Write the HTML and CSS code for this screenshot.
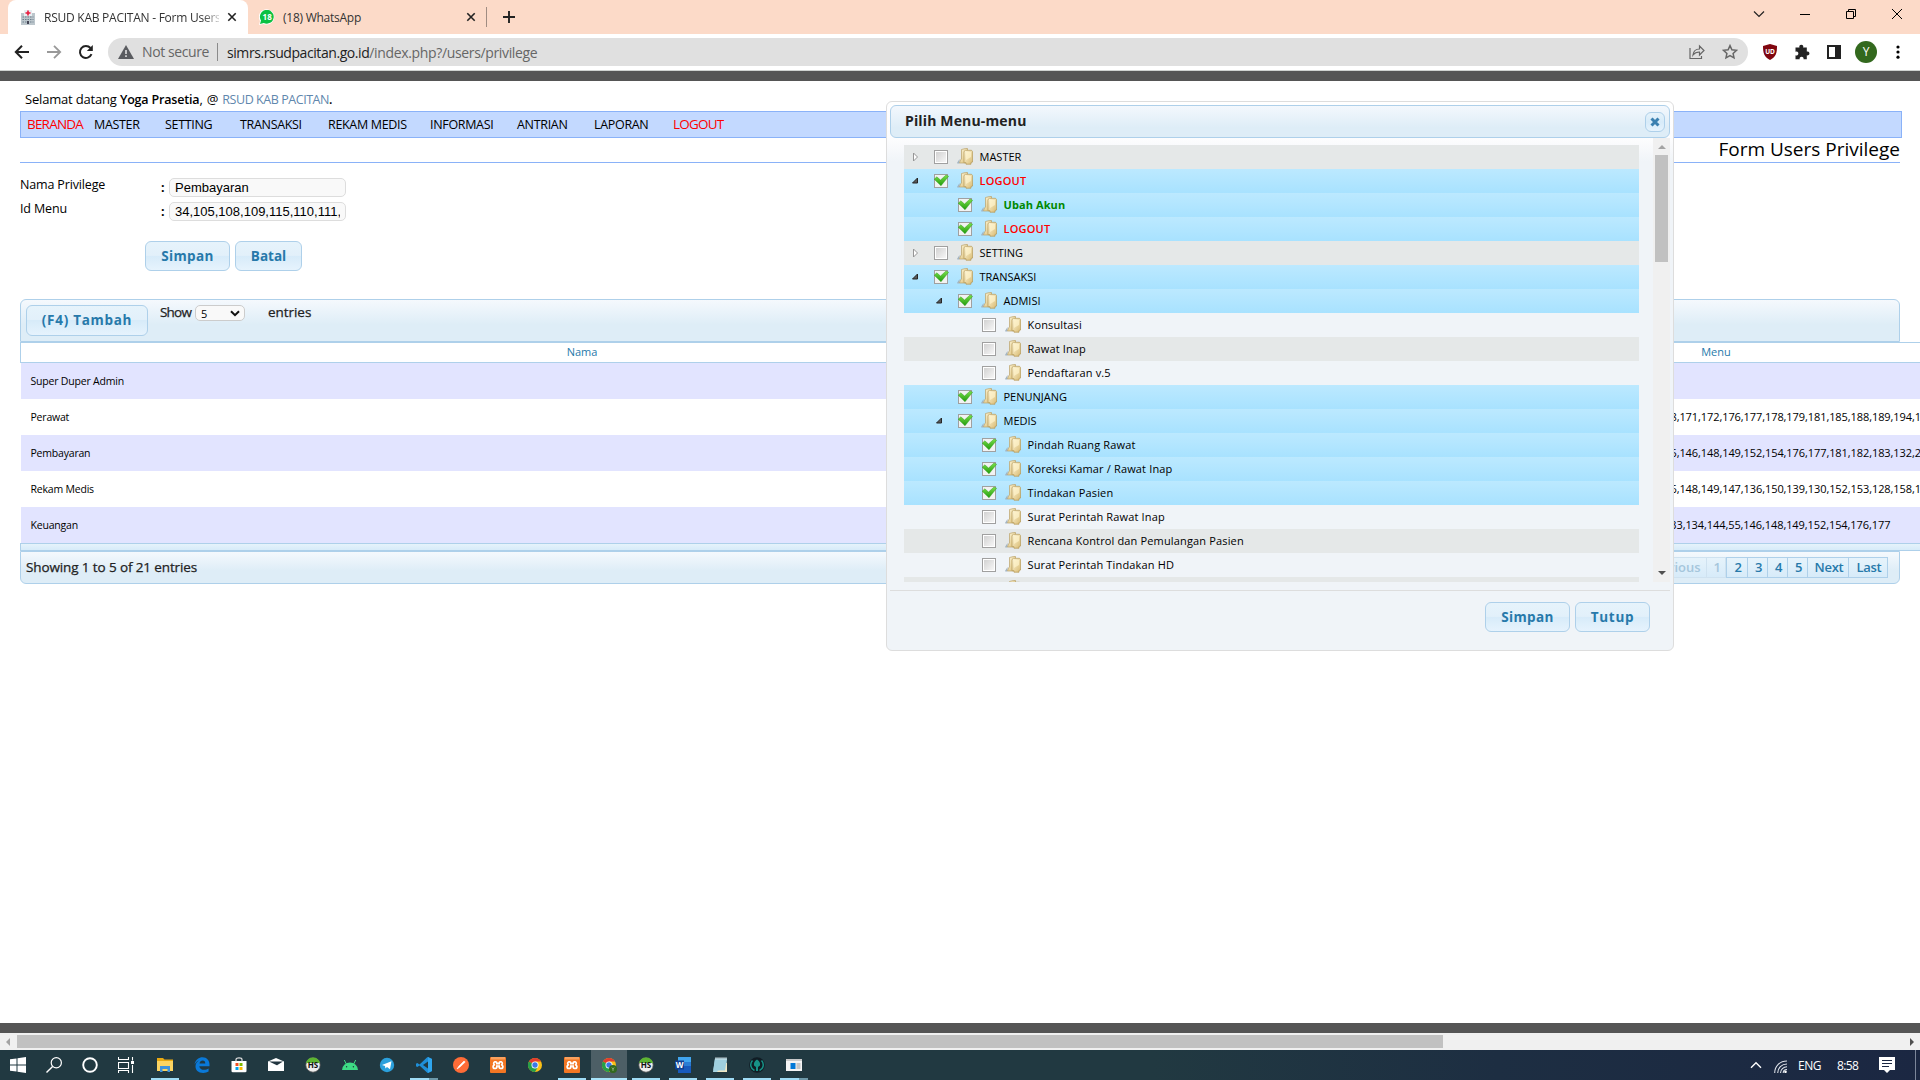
FILE: index.html
```html
<!DOCTYPE html>
<html lang="id">
<head>
<meta charset="utf-8">
<title>RSUD KAB PACITAN - Form Users Privilege</title>
<link rel="stylesheet" href="styles.css">
</head>
<body>
<svg class="defs" aria-hidden="true">
  <defs>
    <linearGradient id="g-folder" x1="0" y1="0" x2="1" y2="1"><stop offset="0" stop-color="#fff8dc"/><stop offset="1" stop-color="#d9bb72"/></linearGradient>
    <linearGradient id="g-box" x1="0" y1="0" x2="1" y2="1"><stop offset="0" stop-color="#d2d2d2"/><stop offset="1" stop-color="#f6f6f6"/></linearGradient>
    <linearGradient id="g-tick" x1="0" y1="0" x2="0" y2="1"><stop offset="0" stop-color="#7be04a"/><stop offset="1" stop-color="#1f9a0c"/></linearGradient>
    <symbol id="folder" viewBox="0 0 16 17"><path d="M0 15l2.500-4v4.500H.5z" fill="#a3b4c2"/><path d="M4.500 1.500l4-1h2V14l-1 1H2.500l1-3 1-1z" fill="url(#g-folder)" stroke="#b9a068" stroke-width=".7"/><path d="M7 3.500l1.500-1.200h6l1.100 1.200v10.500l-1.600.5v1.700H9v-1.500H7z" fill="url(#g-folder)" stroke="#b39755" stroke-width=".7"/><path d="M9 4h5v5l-5 3z" fill="#fff4cc" opacity=".7"/></symbol>
    <symbol id="off" viewBox="0 0 16 16"><rect x="1.500" y="1.500" width="13" height="13" fill="#fff" stroke="#a0a0a0"/><rect x="3" y="3" width="10" height="10" fill="url(#g-box)"/></symbol>
    <symbol id="on" viewBox="0 0 16 16"><rect x="1.500" y="1.500" width="13" height="13" fill="#f2f2f2" stroke="#a0a0a0"/><path d="M1.200 6.200L3.800 3.800 7.500 7l5.500-5 2.600 1.300L8 12.800z" fill="url(#g-tick)" stroke="#1e9412" stroke-width=".4"/></symbol>
    <symbol id="closed" viewBox="0 0 8 10"><path d="M2.500 1v8l4-4z" fill="#fff" stroke="#969696"/></symbol>
    <symbol id="open" viewBox="0 0 8 10"><path d="M6.500 2v5h-5z" fill="#595959" stroke="#262626"/></symbol>
    <symbol id="hs" viewBox="0 0 16 16"><circle cx="8" cy="8" r="7.200" fill="#eee" stroke="#555" stroke-width=".8"/><path d="M1 6a7.200 7.200 0 0 1 14 0z" fill="#5cb531"/><text x="8" y="11" text-anchor="middle" class="hs-text">HS</text></symbol>
    <symbol id="xampp" viewBox="0 0 16 16"><rect width="16" height="16" rx="1" fill="#f37623"/><rect x="1" width="14" height="2.500" fill="#f8a15e"/><path d="M4.800 4.800a1.700 1.700 0 0 0 0 3.200 1.700 1.700 0 0 0 0 3.400h1c1.400 0 1-2 1-2.400h2.400c0 .4-.4 2.400 1 2.400h1a1.700 1.700 0 0 0 0-3.400 1.700 1.700 0 0 0 0-3.200h-1c-1.400 0-1 1.900-1 1.900H6.800s.4-1.900-1-1.900z" fill="none" stroke="#fff" stroke-width="1.700"/></symbol>
    <symbol id="chrome" viewBox="0 0 16 16"><circle cx="8" cy="8" r="7" fill="#fbc116"/><path d="M8 8L1.900 4.500A7 7 0 0 1 14.100 4.500H8z" fill="#e33b2e"/><path d="M8 8l-6.100-3.500A7 7 0 0 0 8 15l3-5.200z" fill="#269f49"/><circle cx="8" cy="8" r="3.500" fill="#fff"/><circle cx="8" cy="8" r="2.700" fill="#3b78e7"/></symbol>
  </defs>
</svg>

<header class="tabs">
  <div class="tab active">
    <svg class="fav" viewBox="0 0 16 16"><path d="M1 4h3V1h8v3h3v12H1z" fill="#bcc6cc"/><path d="M4 1h8v6H4z" fill="#e8eef2"/><path d="M7.200 1.500h1.600v1.700h1.700v1.600H8.800v1.700H7.200V4.800H5.500V3.200h1.700z" fill="#e8193c"/><path d="M2.500 8h11M2.500 10.500h11M2.500 13h11" stroke="#6d7f8c" stroke-width="1.200" stroke-dasharray="1.500 1"/><path d="M7 12h2v3H7z" fill="#445"/></svg>
    <span class="tab-title fade">RSUD KAB PACITAN - Form Users</span>
    <svg class="x" viewBox="0 0 10 10"><path d="M1.300 1.300l7.400 7.400M8.700 1.300L1.300 8.700" stroke="#222" stroke-width="1.600"/></svg>
  </div>
  <div class="tab second">
    <svg class="fav" viewBox="0 0 16 16"><path d="M0 16l1-4A7.700 7.700 0 1 1 4.500 15z" fill="#fff"/><path d="M1 15l1-3.500A6.900 6.900 0 1 1 4.800 14z" fill="#0cc143"/><text x="8.200" y="11" text-anchor="middle" class="wa-text">18</text></svg>
    <span class="tab-title">(18) WhatsApp</span>
    <svg class="x" viewBox="0 0 10 10"><path d="M1.300 1.300l7.400 7.400M8.700 1.300L1.300 8.700" stroke="#222" stroke-width="1.600"/></svg>
  </div>
  <svg class="plus" viewBox="0 0 14 14"><path d="M7 1v12M1 7h12" stroke="#222" stroke-width="1.900"/></svg>
  <div class="window-buttons">
    <svg viewBox="0 0 12 12"><path d="M1 3.500l5 5 5-5" fill="none" stroke="#222" stroke-width="1.200"/></svg>
    <svg viewBox="0 0 12 12"><path d="M1 6.500h10" stroke="#000"/></svg>
    <svg viewBox="0 0 12 12"><path d="M1.500 3.500h7v7h-7zM3.500 3.500v-2h7v7h-2" fill="none" stroke="#000"/></svg>
    <svg viewBox="0 0 12 12"><path d="M1 1l10 10M11 1L1 11" stroke="#000"/></svg>
  </div>
</header>

<div class="toolbar">
  <svg class="nav-icon" viewBox="0 0 16 16"><path d="M15 8H2M8 1.800L1.800 8 8 14.200" fill="none" stroke="#222" stroke-width="2"/></svg>
  <svg class="nav-icon" viewBox="0 0 16 16"><path d="M1 8h13M8 1.800L14.200 8 8 14.200" fill="none" stroke="#999" stroke-width="1.800"/></svg>
  <svg class="nav-icon" viewBox="0 0 16 16"><path d="M13.500 10.200A6 6 0 1 1 12.500 4" fill="none" stroke="#222" stroke-width="2"/><path d="M14.800 1v6H8.800z" fill="#222"/></svg>
  <div class="omnibox">
    <svg class="warn" viewBox="0 0 16 14"><path d="M8 0l8 14H0z" fill="#5a5c60"/><path d="M8 5v4M8 10.300v1.700" stroke="#e0e0e0" stroke-width="1.600"/></svg>
    <span class="not-secure">Not secure</span>
    <span class="url"><b>simrs.rsudpacitan.go.id</b><i>/index.php?/users/privilege</i></span>
    <svg class="share" viewBox="0 0 16 16"><path d="M1 4v10.500h11.500V12" fill="none" stroke="#666" stroke-width="1.200"/><path d="M4 11c.5-4 3-6 6.500-6V2L15 6.500 10.500 11V8C7.500 8 5.500 9 4 11z" fill="none" stroke="#666" stroke-width="1.200"/></svg>
    <svg class="star" viewBox="0 0 16 16"><path d="M8 1.600l1.900 4.200 4.600.5-3.400 3.100.9 4.500L8 11.600l-4 2.300.9-4.500L1.500 6.300l4.600-.5z" fill="none" stroke="#666" stroke-width="1.500"/></svg>
  </div>
  <div class="extensions">
    <svg viewBox="0 0 16 16"><path d="M8 0l7 2c0 7-1 11-7 14C2 13 1 9 1 2z" fill="#800610"/><text x="8" y="9.500" text-anchor="middle" class="ub-text">UD</text></svg>
    <svg viewBox="0 0 16 16"><path d="M1.500 3.500h4a2 2 0 1 1 3.600 0h3.700v4a2 2 0 1 1 0 3.800v4H9.500a2 2 0 1 0-3.800 0H1.500v-4a2 2 0 1 0 0-3.600z" fill="#222"/></svg>
    <svg viewBox="0 0 16 16"><path d="M1 1h14v14H1zM3 3v10h6V3z" fill="#222" fill-rule="evenodd"/></svg>
    <span class="avatar">Y</span>
    <svg viewBox="0 0 16 16"><circle cx="8" cy="3" r="1.600"/><circle cx="8" cy="8" r="1.600"/><circle cx="8" cy="13.200" r="1.600"/></svg>
  </div>
</div>

<main class="page">
  <p class="welcome"><span>Selamat datang </span><b>Yoga Prasetia</b><span class="at">, @ </span><a>RSUD KAB PACITAN</a><b>.</b></p>
  <nav class="menu"><span class="hot">BERANDA</span><span>MASTER</span><span>SETTING</span><span>TRANSAKSI</span><span>REKAM MEDIS</span><span>INFORMASI</span><span>ANTRIAN</span><span>LAPORAN</span><span class="hot logout">LOGOUT</span></nav>
  <h1 class="title"><span>Form Users Privilege</span></h1>

  <form class="form">
    <div class="field"><label>Nama Privilege</label><b>:</b><input class="input" value="Pembayaran"></div>
    <div class="field"><label>Id Menu</label><b>:</b><input class="input" value="34,105,108,109,115,110,111,112"></div>
    <div class="form-actions"><span class="btn w-simpan">Simpan</span><span class="btn w-batal">Batal</span></div>
  </form>

  <section class="grid">
    <div class="grid-top">
      <span class="btn w-tambah">(F4) Tambah</span>
      <span class="show">Show</span>
      <span class="select"><span>5</span><svg viewBox="0 0 10 7"><path d="M1 1.200l4 4 4-4" fill="none" stroke="#111" stroke-width="2"/></svg></span>
      <span class="entries">entries</span>
    </div>
    <div class="grid-head"><span class="th-name">Nama</span><span class="th-menu">Menu</span></div>
    <div class="row odd"><span class="name">Super Duper Admin</span></div>
    <div class="row"><span class="name">Perawat</span><span class="ids">158,171,172,176,177,178,179,181,185,188,189,194,195</span></div>
    <div class="row odd"><span class="name">Pembayaran</span><span class="ids">145,146,148,149,152,154,176,177,181,182,183,132,201</span></div>
    <div class="row"><span class="name">Rekam Medis</span><span class="ids">146,148,149,147,136,150,139,130,152,153,128,158,159</span></div>
    <div class="row odd"><span class="name">Keuangan</span><span class="ids short">133,134,144,55,146,148,149,152,154,176,177</span></div>
    <div class="grid-foot"></div>
    <div class="grid-bottom">
      <span class="info">Showing 1 to 5 of 21 entries</span>
      <div class="pager"><span class="pg dim prev">Previous</span><span class="pg dim n1">1</span><span class="pg n2">2</span><span class="pg">3</span><span class="pg">4</span><span class="pg">5</span><span class="pg next">Next</span><span class="pg last">Last</span></div>
    </div>
  </section>

  <div class="dialog">
    <div class="dialog-title"><span>Pilih Menu-menu</span><span class="close"><svg viewBox="0 0 10 10"><path d="M1.500 1.500l7 7M8.500 1.500l-7 7" stroke="#3b80b0" stroke-width="3"/></svg></span></div>
    <div class="dialog-body">
      <div class="tree">
        <div class="node even"><svg class="arrow"><use href="#closed"/></svg><svg class="check"><use href="#off"/></svg><svg class="fold"><use href="#folder"/></svg><span class="caps">MASTER</span></div>
        <div class="node sel"><svg class="arrow"><use href="#open"/></svg><svg class="check"><use href="#on"/></svg><svg class="fold"><use href="#folder"/></svg><span class="red">LOGOUT</span></div>
        <div class="node sel l1"><svg class="arrow"></svg><svg class="check"><use href="#on"/></svg><svg class="fold"><use href="#folder"/></svg><span class="green">Ubah Akun</span></div>
        <div class="node sel l1"><svg class="arrow"></svg><svg class="check"><use href="#on"/></svg><svg class="fold"><use href="#folder"/></svg><span class="red">LOGOUT</span></div>
        <div class="node even"><svg class="arrow"><use href="#closed"/></svg><svg class="check"><use href="#off"/></svg><svg class="fold"><use href="#folder"/></svg><span class="caps">SETTING</span></div>
        <div class="node sel"><svg class="arrow"><use href="#open"/></svg><svg class="check"><use href="#on"/></svg><svg class="fold"><use href="#folder"/></svg><span class="caps">TRANSAKSI</span></div>
        <div class="node sel l1"><svg class="arrow"><use href="#open"/></svg><svg class="check"><use href="#on"/></svg><svg class="fold"><use href="#folder"/></svg><span class="caps">ADMISI</span></div>
        <div class="node l2"><svg class="arrow"></svg><svg class="check"><use href="#off"/></svg><svg class="fold"><use href="#folder"/></svg><span>Konsultasi</span></div>
        <div class="node even l2"><svg class="arrow"></svg><svg class="check"><use href="#off"/></svg><svg class="fold"><use href="#folder"/></svg><span>Rawat Inap</span></div>
        <div class="node l2"><svg class="arrow"></svg><svg class="check"><use href="#off"/></svg><svg class="fold"><use href="#folder"/></svg><span>Pendaftaran v.5</span></div>
        <div class="node sel l1"><svg class="arrow"></svg><svg class="check"><use href="#on"/></svg><svg class="fold"><use href="#folder"/></svg><span class="caps">PENUNJANG</span></div>
        <div class="node sel l1"><svg class="arrow"><use href="#open"/></svg><svg class="check"><use href="#on"/></svg><svg class="fold"><use href="#folder"/></svg><span class="caps">MEDIS</span></div>
        <div class="node sel l2"><svg class="arrow"></svg><svg class="check"><use href="#on"/></svg><svg class="fold"><use href="#folder"/></svg><span>Pindah Ruang Rawat</span></div>
        <div class="node sel l2"><svg class="arrow"></svg><svg class="check"><use href="#on"/></svg><svg class="fold"><use href="#folder"/></svg><span>Koreksi Kamar / Rawat Inap</span></div>
        <div class="node sel l2"><svg class="arrow"></svg><svg class="check"><use href="#on"/></svg><svg class="fold"><use href="#folder"/></svg><span>Tindakan Pasien</span></div>
        <div class="node l2"><svg class="arrow"></svg><svg class="check"><use href="#off"/></svg><svg class="fold"><use href="#folder"/></svg><span>Surat Perintah Rawat Inap</span></div>
        <div class="node even l2"><svg class="arrow"></svg><svg class="check"><use href="#off"/></svg><svg class="fold"><use href="#folder"/></svg><span>Rencana Kontrol dan Pemulangan Pasien</span></div>
        <div class="node l2"><svg class="arrow"></svg><svg class="check"><use href="#off"/></svg><svg class="fold"><use href="#folder"/></svg><span>Surat Perintah Tindakan HD</span></div>
        <div class="node even l2"><svg class="arrow"></svg><svg class="check"></svg><svg class="fold"><use href="#folder"/></svg></div>
      </div>
      <div class="vscroll"><svg viewBox="0 0 8 4"><path d="M0 4l4-4 4 4z" fill="#a3a3a3"/></svg><i></i><svg class="down" viewBox="0 0 8 4"><path d="M0 0l4 4 4-4z" fill="#505050"/></svg></div>
    </div>
    <div class="dialog-actions"><span class="btn w-simpan">Simpan</span><span class="btn w-tutup">Tutup</span></div>
  </div>
</main>

<div class="hscroll"><svg viewBox="0 0 4 8"><path d="M4 0L0 4l4 4z" fill="#a3a3a3"/></svg><i></i><svg class="right" viewBox="0 0 4 8"><path d="M0 0l4 4-4 4z" fill="#505050"/></svg></div>

<footer class="taskbar">
  <span class="sys"><svg viewBox="0 0 16 16"><path d="M0 2.300l6.500-.9v6.100H0zM7.500 1.200L16 0v7.500H7.500zM0 8.500h6.500v6.100L0 13.700zM7.500 8.500H16V16l-8.500-1.200z" fill="#fff"/></svg></span>
  <span class="sys"><svg viewBox="0 0 16 16"><circle cx="10.300" cy="5.700" r="5.100" fill="none" stroke="#fff" stroke-width="1.200"/><path d="M6.600 9.400L.5 15.500" stroke="#fff" stroke-width="1.400"/></svg></span>
  <span class="sys"><svg viewBox="0 0 16 16"><circle cx="8" cy="8" r="6.800" fill="none" stroke="#fff" stroke-width="1.900"/></svg></span>
  <span class="sys"><svg viewBox="0 0 16 16"><path d="M.5 0v2.500h10V0M.5 5.500h10v6H.5zM.5 16v-2.500h10V16M14.500 0v3.500M14.500 8v8" fill="none" stroke="#fff" stroke-width="1.100"/><path d="M13 4h3v3h-3z" fill="#fff"/></svg></span>
  <span class="app run first"><svg viewBox="0 0 16 16"><path d="M0 1h6l1.500 1.500H16V14H0z" fill="#e9a912"/><path d="M0 4h16v10H0z" fill="#fcd462"/><path d="M3 9h10v6h-2.500v-3h-5v3H3z" fill="#3f93dc"/></svg></span>
  <span class="app"><svg viewBox="0 0 16 16"><path d="M.5 7.500C1.500 2.500 5 .3 8.500.3c4.500 0 7 3.400 7 7v1.900H5.300c.2 2.500 2.500 3.600 4.700 3.600 1.800 0 3.300-.5 4.600-1.300v3.100c-1.600.9-3.300 1.300-5.300 1.300-5.200 0-8-3.200-7.800-7 .1-2.300 1.500-4.300 3.500-5.500-2 .4-3.500 2-4.500 4.100zM5.500 6.500h5.800c0-1.800-.9-3-2.600-3S5.800 4.800 5.500 6.500z" fill="#0a79d8"/></svg></span>
  <span class="app"><svg viewBox="0 0 16 16"><path d="M.5 4h15v10.500l-1 .8h-13l-1-.8z" fill="#fff"/><path d="M5 4.500V2.600C5 .2 11 .2 11 2.600v1.900" fill="none" stroke="#ddd" stroke-width="1.200"/><path d="M4.500 6h3v3h-3z" fill="#f25022"/><path d="M8.500 6h3v3h-3z" fill="#7fba00"/><path d="M4.500 10h3v3h-3z" fill="#00a4ef"/><path d="M8.500 10h3v3h-3z" fill="#ffb900"/></svg></span>
  <span class="app"><svg viewBox="0 0 16 16"><path d="M0 4.500L8 1l8 3.500V14H0z" fill="#fff"/><path d="M1 4.500h14L9 8.300l3 1.500z" fill="#22353f"/></svg></span>
  <span class="app"><svg><use href="#hs"/></svg></span>
  <span class="app"><svg viewBox="0 0 16 16"><path d="M0 13a8 7.500 0 0 1 16 0z" fill="#3ddc84"/><path d="M2.300 3l2 4M13.700 3l-2 4" stroke="#3ddc84"/><circle cx="4.600" cy="9.800" r=".7" fill="#22353f"/><circle cx="11.400" cy="9.800" r=".7" fill="#22353f"/></svg></span>
  <span class="app"><svg viewBox="0 0 16 16"><circle cx="8" cy="8" r="7.200" fill="#2ba0dc"/><path d="M3 8l9.500-3.800L11 12.200 8 10l-1.600 1.600L6 9z" fill="#fff"/></svg></span>
  <span class="app run stack"><svg viewBox="0 0 16 16"><path d="M11.500 0L16 2v12l-4.500 2-8-7.500L1.300 10 0 9.300V6.700L1.300 6l2.200 1.500zM12 4.500L7 8l5 3.500z" fill="#1f8fd8" fill-rule="evenodd"/><path d="M12 0l4 2v12l-4 2z" fill="#2fa6ee"/></svg></span>
  <span class="app"><svg viewBox="0 0 16 16"><circle cx="8" cy="8" r="8" fill="#ff6c37"/><path d="M4 12l2-3 5-5 1.200 1L7 10z" fill="#fff" stroke="#fff" stroke-width=".6"/></svg></span>
  <span class="app"><svg><use href="#xampp"/></svg></span>
  <span class="app"><svg><use href="#chrome"/></svg></span>
  <span class="app run"><svg><use href="#xampp"/></svg></span>
  <span class="app run current"><svg viewBox="0 0 16 16"><use href="#chrome"/><circle cx="12" cy="12" r="4" fill="#33691e"/><path d="M10.800 10.500l1.200 1.700 1.200-1.700M12 12v2" fill="none" stroke="#9cbf86" stroke-width=".8"/></svg></span>
  <span class="app run"><svg><use href="#hs"/></svg></span>
  <span class="app run"><svg viewBox="0 0 16 16"><path d="M3 0h13v16H3z" fill="#185abd"/><path d="M3 0h13v5H3z" fill="#41a5ee"/><path d="M3 5h13v4H3z" fill="#2b7cd3"/><rect y="3.500" width="9" height="9" fill="#103f91"/><text x="4.500" y="11" text-anchor="middle" class="word-text">W</text></svg></span>
  <span class="app run"><svg viewBox="0 0 16 16"><path d="M3 1.500h12L13 15H1z" fill="#a9d8e6"/><path d="M13 5l2 1v9H5z" fill="#efe7c4"/><path d="M3 1.500h12l-2 12H1.300z" fill="#9fd0df"/><path d="M4 0v3M6 0v3M8 0v3M10 0v3M12 0v3M14 0v3" stroke="#dfe7ea" stroke-width=".8"/></svg></span>
  <span class="app run"><svg viewBox="0 0 16 16"><circle cx="8" cy="8" r="7.800" fill="#101c24"/><path d="M5.500 13.500A6.200 6.200 0 0 1 3.500 3.500M10.500 13.500a6.200 6.200 0 0 0 2-10" fill="none" stroke="#179287" stroke-width="1.500"/><path d="M8 2.500c2.500 1.500 3.500 3.500 3 6L9 10v4H7v-4L5 8.500c-.5-2.500.5-4.500 3-6z" fill="#179287"/></svg></span>
  <span class="app run stack"><svg viewBox="0 0 16 16"><path d="M0 2h16v12H0z" fill="#f4f4f4"/><path d="M0 2h16v2H0z" fill="#c9c9c9"/><path d="M4.500 6h5v6h-5z" fill="#0078d7"/><path d="M10.500 7h4M10.500 9h4M10.500 11h4" stroke="#999"/></svg></span>
  <div class="tray">
    <svg class="chev" viewBox="0 0 12 8"><path d="M1 6.800l5-5 5 5" fill="none" stroke="#fff" stroke-width="1.400"/></svg>
    <svg class="wifi" viewBox="0 0 13 13"><path d="M.7 13C.7 6 6 1 13 1M3.700 13c0-5 4-9 9.300-9M6.500 13c0-3.500 3-6.200 6.500-6.200M9.200 13c0-2 1.500-3.500 3.800-3.500" fill="none" stroke="#dfe3ea" stroke-width="1.100"/><circle cx="11.500" cy="11.800" r="1.300" fill="#fff"/></svg>
    <span class="lang">ENG</span>
    <span class="clock">8:58</span>
    <svg class="notif" viewBox="0 0 16 16"><path d="M0 0h16v13h-5l-3 3-3-3H0z" fill="#fff"/><path d="M3 3.500h10M3 6.500h10M3 9.500h7" stroke="#1b2742"/></svg>
  </div>
</footer>
</body>
</html>
```
FILE: styles.css
```css
* { box-sizing: border-box; }
html, body { margin: 0; height: 1080px; overflow: hidden; }
body { display: flex; flex-direction: column; width: 1920px; background: #fff; color: #000; font-family: "Open Sans", "Noto Sans", sans-serif; }
svg { display: block; flex: none; }
.defs { position: absolute; width: 0; height: 0; }
.hs-text { font: bold 8px "Open Sans", sans-serif; fill: #111; }
.wa-text { font: bold 8px "Open Sans", sans-serif; fill: #fff; }
.ub-text { font: bold 6.500px "Open Sans", sans-serif; fill: #fff; }
.word-text { font: bold 8px "Open Sans", sans-serif; fill: #fff; }

/* browser chrome */
.tabs { display: flex; height: 34px; flex: none; background: #fcdac8; padding-left: 8px; }
.tab { display: flex; align-items: center; height: 34px; font-size: 12px; color: #333; }
.tab.active { width: 240px; background: #fff; border-radius: 8px 8px 0 0; padding: 0 11px 0 12px; }
.tab.second { width: 239px; padding: 0 10px 0 11px; border-right: 1px solid #a08c82; height: 20px; margin-top: 7px; }
.fav { width: 16px; height: 16px; margin-right: 8px; }
.tab-title { flex: 1; overflow: hidden; white-space: nowrap; letter-spacing: -.25px; }
.fade { -webkit-mask-image: linear-gradient(90deg, #000 158px, transparent 180px); mask-image: linear-gradient(90deg, #000 158px, transparent 180px); }
.x { width: 10px; height: 10px; margin-left: 8px; }
.plus { width: 14px; height: 14px; margin: 10px 0 0 15px; }
.window-buttons { display: flex; gap: 34px; margin: 8px 17px 0 auto; }
.window-buttons svg { width: 12px; height: 12px; }
.toolbar { display: flex; align-items: center; height: 37px; flex: none; padding: 0 14px; border-bottom: 1px solid #cfd2d0; }
.nav-icon { width: 16px; height: 16px; margin-right: 16px; }
.omnibox { display: flex; align-items: center; width: 1640px; height: 28px; margin-left: -2px; padding: 0 10px; border-radius: 14px; background: #e0e0e0; font-size: 14px; }
.warn { width: 16px; height: 14px; }
.not-secure { margin-left: 8px; color: #666; width: 76px; border-right: 1px solid #8b8b8b; line-height: 18px; letter-spacing: -.4px; }
.url { flex: 1; margin-left: 9px; white-space: nowrap; }
.url b, .url i { font-weight: 400; font-style: normal; color: #222; letter-spacing: -.43px; }
.url i { color: #666; letter-spacing: -.35px; }
.share, .star { width: 16px; height: 16px; margin-left: 17px; }
.extensions { display: flex; align-items: center; margin-left: 14px; gap: 16px; }
.extensions svg { width: 16px; height: 16px; }
.avatar { width: 22px; height: 22px; margin: 0 -3px; border-radius: 50%; background: #33691e; color: #fff; font: 12px/22px "Open Sans", sans-serif; text-align: center; }

/* page */
.page { position: relative; height: 962px; flex: none; padding-left: 20px; border: solid #555; border-width: 10px 0; overflow: hidden; }
.welcome { margin: 0; height: 30px; padding-left: 5px; font-size: 13px; line-height: 36px; white-space: pre; letter-spacing: -.18px; }
.welcome b { font-size: 12.500px; font-weight: 600; }
.welcome .at { letter-spacing: .3px; }
.welcome a { color: #5f87ad; font-size: 12.500px; letter-spacing: -.45px; }
.menu { display: grid; grid-template-columns: 67px 71px 75px 88px 102px 87px 77px 79px 60px; width: 1882px; height: 27px; padding-left: 6px; border: 1px solid #8ab2f8; background: #c3d9ff; font-size: 12.500px; line-height: 25px; white-space: nowrap; letter-spacing: -.32px; }
.hot { color: #f00; font-size: 13.500px; letter-spacing: -.8px; }
.title { width: 1880px; height: 25px; margin: 0; border-bottom: 1px solid #8ab2f8; text-align: right; font-weight: 400; font-size: 19px; line-height: 23px; }
.form { padding-top: 15px; height: 136px; }
.field { display: flex; height: 24px; font-size: 12.500px; }
.field label { width: 141px; line-height: 14px; letter-spacing: -.15px; }
.field b { width: 8px; line-height: 20px; }
.input { width: 177px; height: 19px; margin: 0; padding: 0 5px; border: 1px solid #ddd; border-radius: 5px; background: #f9f9f9; font: 13px "Liberation Sans", Arial, sans-serif; }
.form-actions { display: flex; gap: 5px; margin: 15px 0 0 125px; }
.btn { display: block; flex: none; height: 30px; border: 1px solid #aed0ea; border-radius: 6px; background: linear-gradient(#e6f3fb 0, #e2f0fa 48%, #d7ebf9 50%, #e6f3fd 100%); color: #2779aa; font-weight: 700; font-size: 13.500px; line-height: 28px; text-align: center; white-space: nowrap; }
.w-simpan { width: 85px; letter-spacing: .35px; }
.w-batal { width: 67px; }
.w-tutup { width: 75px; letter-spacing: .7px; }
.w-tambah { width: 122px; height: 31px; letter-spacing: .7px; }
.grid { width: 1900px; }
.grid-top { display: flex; width: 1880px; height: 43px; padding: 5px; border: 1px solid #aed0ea; border-radius: 6px 6px 0 0; background: linear-gradient(#f5f9fd, #deedf7 60%); font-size: 13.500px; color: #222; }
.show, .entries, .info { -webkit-text-stroke: .25px #222; }
.show { width: 35px; margin-left: 12px; line-height: 14px; letter-spacing: -.8px; }
.select { display: flex; align-items: center; justify-content: space-between; width: 50px; height: 16px; padding: 0 4px 0 5px; border: 1px solid #ccc; border-radius: 5px; background: #f9f9f9; font: 11px "Open Sans", sans-serif; color: #000; }
.select svg { width: 10px; height: 7px; }
.entries { margin-left: 23px; line-height: 14px; letter-spacing: -.05px; }
.grid-head { display: flex; height: 21px; border: solid #aed0ea; border-width: 1px 0 1px 1px; color: #2779aa; font-size: 11px; line-height: 17px; text-align: center; overflow: hidden; }
.th-name { width: 1122px; flex: none; }
.th-menu { width: 1146px; flex: none; }
.row { display: flex; height: 36px; margin-left: 1px; font-size: 11px; line-height: 36px; white-space: nowrap; }
.odd { background: #e2e4ff; }
.name { width: 1637px; flex: none; padding-left: 9.500px; font-size: 10.500px; letter-spacing: -.2px; }
.ids { letter-spacing: -.08px; }
.short { margin-left: 6px; }
.grid-foot { height: 8px; border: solid #aed0ea; border-width: 1px 0 1px 1px; background: linear-gradient(#e6f3fb, #d7ebf9); }
.grid-bottom { display: flex; justify-content: space-between; width: 1880px; height: 33px; padding: 5px 11px 5px 5px; border: 1px solid #aed0ea; border-radius: 0 0 6px 6px; background: linear-gradient(#f5f9fd, #deedf7 60%); font-size: 13.500px; line-height: 20px; color: #222; }
.info { letter-spacing: -.12px; }
.pager { display: flex; height: 21px; }
.pg { width: 20px; padding-left: 2px; border: 1px solid #aed0ea; border-left: 0; background: linear-gradient(#e6f3fb, #d7ebf9); color: #2779aa; font-weight: 600; font-size: 13px; line-height: 19px; text-align: center; letter-spacing: -.3px; }
.dim { color: #a5c6dc; border-color: #cfe2f0; }
.prev { width: 66px; padding: 0; letter-spacing: 0; }
.n1 { width: 19px; }
.n2 { width: 22px; border-left: 1px solid #aed0ea; }
.next { width: 41px; }
.last { width: 39px; }

/* menu picker */
.dialog { position: absolute; left: 886px; top: 20px; width: 788px; height: 550px; padding: 3px; border: 1px solid #ddd; border-radius: 6px; background: linear-gradient(#fff 0, #fdfdfe 36px, #f0f4f8 60px); }
.dialog-title { display: flex; align-items: center; justify-content: space-between; height: 33px; padding: 0 4px 0 14px; border: 1px solid #aed0ea; border-radius: 6px; background: linear-gradient(#f3f8fd, #deedf7 70%); font-size: 14px; line-height: 18px; font-weight: 700; color: #222; letter-spacing: .15px; }
.dialog-title > span:first-child { margin-bottom: 2px; }
.close { display: flex; align-items: center; justify-content: center; width: 20px; height: 20px; border: 1px solid #aed0ea; border-radius: 6px; background: linear-gradient(#e6f3fb 0, #d7ebf9 50%, #e6f3fd); }
.close svg { width: 10px; height: 10px; }
.dialog-body { display: flex; height: 444px; }
.tree { width: 763px; padding: 7px 14px 0; overflow: hidden; }
.node { display: flex; height: 24px; padding-left: 7px; font-size: 11px; line-height: 23px; letter-spacing: .15px; white-space: nowrap; }
.even { background: #e5e8e8; }
.sel { background: linear-gradient(#bce9ff, #a8e2ff); }
.l1 { padding-left: 31px; }
.l2 { padding-left: 55px; }
.arrow { width: 8px; height: 10px; margin: 7px 14px 0 0; }
.check { width: 16px; height: 16px; margin-top: 4px; }
.fold { width: 16px; height: 17px; margin: 3px 6.500px 0 8px; }
.red { color: #f00; font-weight: 600; letter-spacing: .2px; }
.green { color: #080; font-weight: 700; letter-spacing: .1px; }
.caps { letter-spacing: 0; }
.vscroll { display: flex; flex-direction: column; align-items: center; width: 17px; padding: 7px 0; background: #f0f0f0; }
.vscroll svg { width: 8px; height: 4px; }
.vscroll i { width: 13px; height: 107px; margin-top: 6px; background: #c1c1c1; }
.vscroll .down { margin-top: auto; }
.dialog-actions { display: flex; justify-content: flex-end; gap: 5px; margin-top: 8px; padding: 11px 20px 0 0; border-top: 1px solid #ddd; }

/* horizontal scrollbar */
.hscroll { display: flex; align-items: center; height: 17px; flex: none; padding: 0 6px; background: #f0f0f0; }
.hscroll svg { width: 4px; height: 8px; }
.hscroll i { width: 1426px; height: 13px; margin-left: 7px; background: #c1c1c1; }
.hscroll .right { margin-left: auto; }

/* taskbar */
.taskbar { display: flex; height: 30px; flex: none; background: linear-gradient(90deg, #213941 0, #213941 60%, #1d2e42 78%, #1b2742 100%); }
.sys, .app { display: flex; align-items: center; justify-content: center; width: 36px; height: 30px; flex: none; }
.app { width: 37px; border: solid transparent; border-width: 0 4px 0 5px; }
.app.first { margin-left: 2px; }
.taskbar .sys svg, .taskbar .app svg { width: 16px; height: 16px; }
.run { background: linear-gradient(#9fdcf5, #9fdcf5) 0 100% / 28px 2px no-repeat; }
.stack { background-image: linear-gradient(90deg, #9fdcf5 19px, #6d98a8 19px); }
.current { width: 36px; margin-left: 1px; border-width: 0; background: linear-gradient(#a8e4fa, #a8e4fa) 0 100% / 100% 2px no-repeat #4d5f66; }
.tray { display: flex; align-items: center; margin-left: auto; margin-right: 4px; padding-right: 20px; border-right: 1px solid #7c869a; color: #fff; font-size: 12px; }
.chev { width: 12px; height: 8px; }
.wifi { width: 13px; height: 13px; margin: 3px 11px 0 12px; }
.lang { width: 39px; letter-spacing: -.5px; }
.clock { width: 42px; letter-spacing: -.6px; }
.notif { width: 16px; height: 16px; }
```
